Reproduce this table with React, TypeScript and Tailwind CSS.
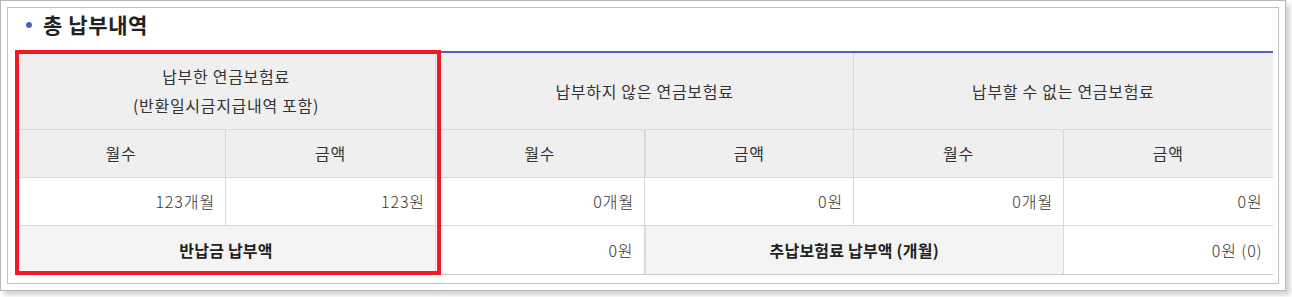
import React from "react";

const font = { fontFamily: '"Noto Sans CJK KR", "Noto Sans", sans-serif' };

export default function App() {
  const th = "bg-[#efefef] text-[16px] tracking-[0.7px] text-[#333] font-normal text-center border-l border-[#d9d9d9] align-middle";
  const td = "bg-white text-[16px] tracking-[0.9px] text-[#333] font-light text-right pr-[10px] border-l border-[#d9d9d9] align-middle";
  const label = "bg-[#f4f4f4] text-[16px] tracking-[0.2px] text-[#222] font-semibold text-center border-l border-[#d9d9d9] align-middle";

  return (
    <div className="min-h-screen bg-white" style={font}>
      <div className="w-[1286px] h-[291px] border border-[#b8b8b8] bg-white p-[6px] shadow-[4px_4px_5px_rgba(0,0,0,0.18)]">
        <div className="h-full border border-[#c2c2c2] pl-[8px] pr-[6px]">
          {/* section title */}
          <div className="h-[43px] flex items-center pb-[10px] pl-[10px] gap-[11px]">
            <span className="w-[6px] h-[6px] rounded-full bg-[#4d61b8]" />
            <span className="text-[21px] font-bold text-[#222] tracking-[0.6px]">총 납부내역</span>
          </div>

          <div className="relative w-[1256px]">
            <table className="w-full table-fixed border-collapse border-t-2 border-t-[#4d62b5] border-b border-b-[#c9c9c9]">
              <colgroup>
                <col className="w-[209px]" />
                <col className="w-[210px]" />
                <col className="w-[209px]" />
                <col className="w-[209px]" />
                <col className="w-[210px]" />
                <col className="w-[209px]" />
              </colgroup>
              <tbody>
                <tr className="h-[77px] border-b border-[#d9d9d9]">
                  <th colSpan={2} className={th + " leading-[29px]"}>
                    납부한 연금보험료
                    <br />
                    (반환일시금지급내역 포함)
                  </th>
                  <th colSpan={2} className={th}>납부하지 않은 연금보험료</th>
                  <th colSpan={2} className={th}>납부할 수 없는 연금보험료</th>
                </tr>
                <tr className="h-[48px] border-b border-[#d9d9d9]">
                  <th className={th}>월수</th>
                  <th className={th}>금액</th>
                  <th className={th}>월수</th>
                  <th className={th + " border-l-2"}>금액</th>
                  <th className={th}>월수</th>
                  <th className={th}>금액</th>
                </tr>
                <tr className="h-[48px] border-b border-[#d9d9d9]">
                  <td className={td}>123개월</td>
                  <td className={td}>123원</td>
                  <td className={td}>0개월</td>
                  <td className={td}>0원</td>
                  <td className={td}>0개월</td>
                  <td className={td}>0원</td>
                </tr>
                <tr className="h-[49px]">
                  <td colSpan={2} className={label}>반납금 납부액</td>
                  <td className={td}>0원</td>
                  <td colSpan={2} className={label + " border-l-2"}>추납보험료 납부액 (개월)</td>
                  <td className={td}>0원 (0)</td>
                </tr>
              </tbody>
            </table>
            {/* highlight frame around the paid-premium group */}
            <div className="absolute left-[-1px] top-[-1px] w-[426px] h-[225px] border-[4px] border-[#ed1c24] pointer-events-none" />
          </div>
        </div>
      </div>
    </div>
  );
}
